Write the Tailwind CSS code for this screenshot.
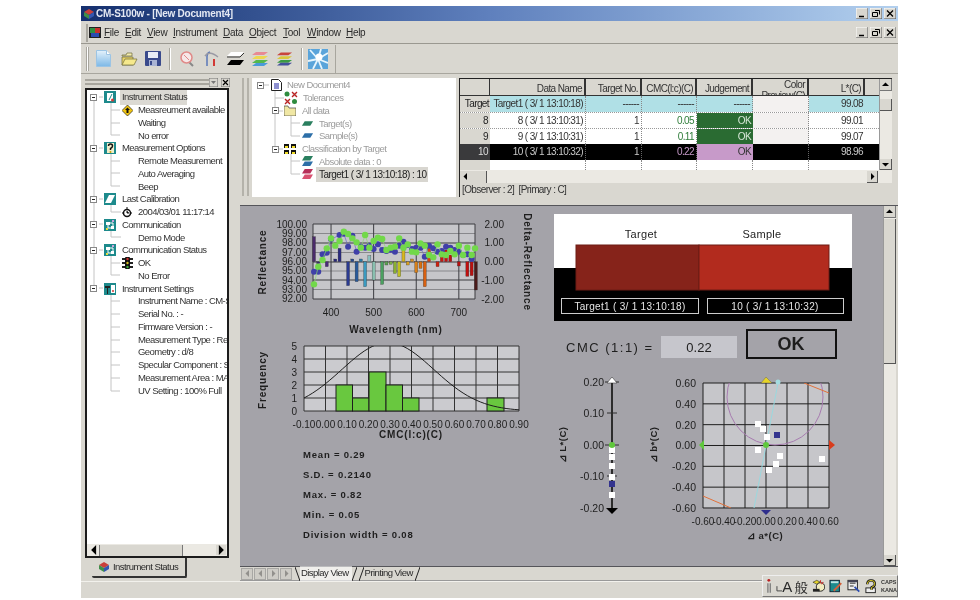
<!DOCTYPE html>
<html lang="en">
<head>
<meta charset="UTF-8">
<title>CM-S100w</title>
<script src="https://cdn.jsdelivr.net/npm/@tailwindcss/browser@4"></script>
</head>
<body class="bg-white w-[980px] h-[600px] overflow-hidden pl-[81px] pt-[6px] font-['Liberation_Sans',sans-serif] text-[9.5px] tracking-[-0.55px] text-[#2a2a2a]">

<!-- shared icons -->
<svg class="hidden">
  <symbol id="tb-minus" viewBox="0 0 7 7"><rect x=".5" y=".5" width="6" height="6" fill="#fff" stroke="#888"/><path d="M2 3.5h3" stroke="#222"/></symbol>
  <symbol id="net" viewBox="0 0 12 12"><rect width="12" height="12" fill="#1d8a8c"/><path d="M2 3h4v3H2zM7 7h3v3H7z" fill="#fff"/><path d="M4 6v3h3M6 4h3v3" stroke="#fff" fill="none"/><rect x="8" y="1" width="2" height="2" fill="#c9a0dc"/><rect x="2" y="9" width="2" height="2" fill="#e6e040"/></symbol>
  <symbol id="stack-a" viewBox="0 0 18 16"><path d="M5 1h12l-4 3H1z" fill="#e88a94"/><path d="M5 5h12l-4 3H1z" fill="#ecd850"/><path d="M5 9h12l-4 3H1z" fill="#54b84c"/><path d="M5 12h12l-4 3H1z" fill="#4a9ad8"/></symbol>
  <symbol id="plate" viewBox="0 0 14 8"><path d="M4 1h9L10 6H1z" fill="currentColor"/></symbol>
  <symbol id="win-min" viewBox="0 0 12 11"><rect width="12" height="11" fill="#d8d6cf"/><path d="M0 11V0h12" stroke="#fff" fill="none"/><path d="M12 0v11H0" stroke="#555" fill="none"/><path d="M3 8.5h5" stroke="#000" stroke-width="1.5"/></symbol>
  <symbol id="win-res" viewBox="0 0 12 11"><rect width="12" height="11" fill="#d8d6cf"/><path d="M0 11V0h12" stroke="#fff" fill="none"/><path d="M12 0v11H0" stroke="#555" fill="none"/><path d="M5 2.5h4.500v4M2.500 4.500h5v4h-5z" stroke="#000" fill="none"/></symbol>
  <symbol id="win-x" viewBox="0 0 12 11"><rect width="12" height="11" fill="#d8d6cf"/><path d="M0 11V0h12" stroke="#fff" fill="none"/><path d="M12 0v11H0" stroke="#555" fill="none"/><path d="M3 2.500l6 6M9 2.500l-6 6" stroke="#000" stroke-width="1.300"/></symbol>
  <symbol id="arr-l" viewBox="0 0 7 7"><path d="M5 0v7L1.500 3.500z" fill="#000"/></symbol>
  <symbol id="arr-r" viewBox="0 0 7 7"><path d="M2 0v7l3.500-3.500z" fill="#000"/></symbol>
  <symbol id="arr-u" viewBox="0 0 7 7"><path d="M0 5h7L3.500 1.500z" fill="#000"/></symbol>
  <symbol id="arr-d" viewBox="0 0 7 7"><path d="M0 2h7L3.500 5.500z" fill="#000"/></symbol>
</svg>

<div class="relative w-[817px] h-[592px] flex flex-col bg-[#d9d7d0] blur-[0.35px]">

  <!-- title bar -->
  <div class="h-[15px] flex items-center pl-[2px] pr-[2px] bg-gradient-to-r from-[#16306f] via-[#5f80bd] to-[#b3d0ee]">
    <svg class="w-[12px] h-[12px]" viewBox="0 0 12 12"><path d="M6 1l5 3-5 3-5-3z" fill="#c9403a"/><path d="M1 4l5 3v4l-5-3z" fill="#3f8f4a"/><path d="M11 4L6 7v4l5-3z" fill="#3457b0"/></svg>
    <span class="ml-[1px] font-bold text-[10px] tracking-[-0.25px] text-[#e4e8f2]">CM-S100w - [New Document4]</span>
    <div class="ml-auto flex gap-[2px]">
      <svg class="w-[12px] h-[11px]"><use href="#win-min"/></svg>
      <svg class="w-[12px] h-[11px]"><use href="#win-res"/></svg>
      <svg class="w-[12px] h-[11px]"><use href="#win-x"/></svg>
    </div>
  </div>

  <!-- menu -->
  <div class="mt-px h-[22px] flex items-center border-b border-[#9a9890] pl-[5px] pr-[2px] tracking-[-0.3px]">
    <div class="w-[2px] h-[18px] border-x border-[#a8a69e] bg-white"></div>
    <svg class="ml-[1px] w-[12px] h-[11px]" viewBox="0 0 12 11"><rect width="12" height="11" fill="#222"/><path d="M1 1h6v5H1z" fill="#2f8f3e"/><path d="M6 1h5v5H6z" fill="#c92f2a"/><path d="M2 6h8v4H2z" fill="#2b4bb0"/></svg>
    <span class="ml-[3px] w-[21px] text-[10px]"><u>F</u>ile</span>
    <span class="w-[22px] text-[10px]"><u>E</u>dit</span>
    <span class="w-[26px] text-[10px]"><u>V</u>iew</span>
    <span class="w-[50px] text-[10px]"><u>I</u>nstrument</span>
    <span class="w-[26px] text-[10px]"><u>D</u>ata</span>
    <span class="w-[34px] text-[10px]"><u>O</u>bject</span>
    <span class="w-[24px] text-[10px]"><u>T</u>ool</span>
    <span class="w-[39px] text-[10px]"><u>W</u>indow</span>
    <span class="text-[10px]"><u>H</u>elp</span>
    <div class="ml-auto flex gap-[2px]">
      <svg class="w-[12px] h-[11px]"><use href="#win-min"/></svg>
      <svg class="w-[12px] h-[11px]"><use href="#win-res"/></svg>
      <svg class="w-[12px] h-[11px]"><use href="#win-x"/></svg>
    </div>
  </div>

  <!-- toolbar -->
  <div class="h-[30px] flex items-center border-b border-[#a8a69e] pl-[5px]">
    <div class="w-[3px] h-[24px] border-x border-[#a8a69e] bg-white"></div>
    <div class="w-[247px] h-[28px] flex items-center border-r border-[#a8a69e] pl-[7px]">
      <svg class="w-[15px] h-[17px]" viewBox="0 0 15 17"><defs><linearGradient id="ng" x1="0" y1="0" x2="0" y2="1"><stop offset="0" stop-color="#e4f1fb"/><stop offset="1" stop-color="#7cb8e6"/></linearGradient></defs><path d="M.5.500h10l4 4v12H.5z" fill="url(#ng)" stroke="#9cc4e4"/><path d="M10.500.500v4h4" fill="#fff" stroke="#9cc4e4"/></svg>
      <svg class="ml-[10px] w-[17px] h-[14px]" viewBox="0 0 17 14"><path d="M1 3h4l1-2h5v3H1z" fill="#f3ecb0" stroke="#6d6a3a" stroke-width=".7"/><path d="M1 13V5h11v8z" fill="#e8d36a" stroke="#6d6a3a" stroke-width=".7"/><path d="M1 13l3-6h12l-3 6z" fill="#f5e88c" stroke="#6d6a3a" stroke-width=".7"/></svg>
      <svg class="ml-[7px] w-[16px] h-[15px]" viewBox="0 0 16 15"><rect width="16" height="15" rx="1" fill="#3a4a8c"/><rect x="3" y="1" width="10" height="6" fill="#e8ecf6"/><rect x="4" y="9" width="8" height="6" fill="#aab4d4"/><rect x="5" y="10" width="2" height="4" fill="#3a4a8c"/></svg>
      <div class="ml-[8px] w-[2px] h-[22px] border-x border-l-[#a8a69e] border-r-white"></div>
      <svg class="ml-[9px] w-[15px] h-[16px]" viewBox="0 0 15 16"><path d="M9 11l4 4" stroke="#888" stroke-width="2"/><circle cx="6.500" cy="6.500" r="5.500" fill="#f6e8e8" stroke="#e08a88" stroke-width="1.500"/><path d="M4 4l5 5" stroke="#e08a88"/></svg>
      <svg class="ml-[9px] w-[15px] h-[16px]" viewBox="0 0 15 16"><path d="M3 15V5q0-3 3-4" stroke="#5a78b8" stroke-width="1.500" fill="none"/><path d="M1 5q4-6 13 1" stroke="#9a9aa4" stroke-width="1.500" fill="none"/><path d="M10 8v7" stroke="#d23a36" stroke-width="2"/></svg>
      <svg class="ml-[7px] w-[18px] h-[16px]" viewBox="0 0 18 16"><path d="M5 1h13l-4 4H1z" fill="#fff"/><path d="M1 6h13l4-4" stroke="#333" fill="none"/><path d="M5 9h13l-4 5H1z" fill="#000"/></svg>
      <svg class="ml-[7px] w-[18px] h-[16px]"><use href="#stack-a"/></svg>
      <svg class="ml-[7px] w-[17px] h-[16px]" viewBox="0 0 18 16"><path d="M5 1h12l-4 3H1z" fill="#c8443c"/><path d="M5 5h12l-4 3H1z" fill="#d8c83c"/><path d="M5 9h12l-4 3H1z" fill="#3a9a44"/><path d="M5 12h12l-4 3H1z" fill="#44509c"/></svg>
      <div class="ml-[8px] w-[2px] h-[22px] border-x border-l-[#a8a69e] border-r-white"></div>
      <svg class="ml-[5px] w-[20px] h-[20px]" viewBox="0 0 20 20"><rect width="20" height="20" fill="#5aa4da"/><path d="M10 10L2 1M10 10L13 0M10 10L20 4M10 10L20 14M10 10L14 20M10 10L5 20M10 10L0 12" stroke="#e6f5fd" stroke-width="1.800"/><circle cx="11" cy="8" r="3.500" fill="#fff"/></svg>
    </div>
  </div>

  <!-- main -->
  <div class="flex-1 min-h-0 flex">

    <!-- left dock -->
    <div class="w-[152px] shrink-0 pl-[4px] pt-[2px] flex flex-col">
      <div class="h-[12px] flex items-center w-[145px]">
        <div class="w-[125px] h-[6px] border-y-2 border-[#a8a69e]"></div>
        <svg class="w-[9px] h-[9px]" viewBox="0 0 9 9"><rect width="9" height="9" fill="#d8d6cf" stroke="#777"/><path d="M2 3h5L4.500 6z" fill="#777"/></svg>
        <svg class="ml-[3px] w-[9px] h-[9px]" viewBox="0 0 9 9"><rect width="9" height="9" fill="#d8d6cf" stroke="#777"/><path d="M2 2l5 5M7 2l-5 5" stroke="#000" stroke-width="1.200"/></svg>
      </div>
      <div class="relative w-[144px] h-[470px] border-2 border-[#1c1c1c] bg-white flex flex-col">
        <!-- tree connectors -->
        <svg class="absolute left-0 top-0 w-[140px] h-[320px]" viewBox="0 0 140 320" fill="none" stroke="#c4c4c4">
          <path d="M7 7V198M12 7h4M12 58h4M12 109h4M12 134h4M12 160h4M12 198h4"/>
          <path d="M24 13V45M24 20h9M24 33h9M24 45h9M24 64V96M24 71h9M24 83h9M24 96h9M24 115v7h10M24 141v6h10M24 166v19M24 173h9M24 185h9M24 204V301M24 211h9M24 224h9M24 237h9M24 250h9M24 262h9M24 275h9M24 288h9M24 301h9"/>
        </svg>
        <div class="relative flex-1 min-h-0 overflow-hidden whitespace-nowrap pt-px text-[#333]">
          <div class="flex items-center h-[12.75px] pl-[3px]"><svg class="w-[7px] h-[7px] mr-[7px]"><use href="#tb-minus"/></svg>
            <svg class="w-[12px] h-[12px]" viewBox="0 0 12 12"><rect width="12" height="12" fill="#1d8a8c"/><path d="M3 2h6v8H3z" fill="#fff"/><path d="M5 9l3-6" stroke="#1d8a8c"/><circle cx="8.500" cy="9" r="1.500" fill="#d23a36"/></svg>
            <span class="ml-[4px] pl-[2px] bg-[#dbd9d3]">Instrument Status</span></div>
          <div class="flex items-center h-[12.75px] pl-[35px]"><svg class="shrink-0 w-[11px] h-[11px]" viewBox="0 0 11 11"><path d="M5.500 0L11 5.500 5.500 11 0 5.500z" fill="#f1c40f" stroke="#222" stroke-width=".7"/><path d="M5.500 2.500L8 5H6.500v3h-2V5H3z" fill="#111"/></svg><span class="ml-[5px]">Measreument available</span></div>
          <div class="flex items-center h-[12.75px] pl-[51px]">Waiting</div>
          <div class="flex items-center h-[12.75px] pl-[51px]">No error</div>
          <div class="flex items-center h-[12.75px] pl-[3px]"><svg class="w-[7px] h-[7px] mr-[7px]"><use href="#tb-minus"/></svg>
            <svg class="w-[12px] h-[12px]" viewBox="0 0 12 12"><rect width="12" height="12" fill="#1d8a8c"/><path d="M3 1h7v10H3z" fill="#f2eecb"/><path d="M4.500 4q0-2 2-2t2 2q0 1.500-2 2.500v1.500" stroke="#111" stroke-width="1.500" fill="none"/><circle cx="6.500" cy="10" r="1" fill="#c9a400"/></svg>
            <span class="ml-[6px]">Measurement Options</span></div>
          <div class="flex items-center h-[12.75px] pl-[51px]">Remote Measurement</div>
          <div class="flex items-center h-[12.75px] pl-[51px]">Auto Averaging</div>
          <div class="flex items-center h-[12.75px] pl-[51px]">Beep</div>
          <div class="flex items-center h-[12.75px] pl-[3px]"><svg class="w-[7px] h-[7px] mr-[7px]"><use href="#tb-minus"/></svg>
            <svg class="w-[12px] h-[12px]" viewBox="0 0 12 12"><rect width="12" height="12" fill="#1d8a8c"/><path d="M5 2h6L7 10H1z" fill="#fff"/></svg>
            <span class="ml-[6px]">Last Calibration</span></div>
          <div class="flex items-center h-[12.75px] pl-[35px]"><svg class="shrink-0 w-[10px] h-[11px] mr-[1px]" viewBox="0 0 10 11"><circle cx="5" cy="6" r="3.500" fill="#fff" stroke="#111" stroke-width="1.500"/><path d="M5 0v2M0 6h2M8 6h2M5 4v2h2" stroke="#111"/></svg><span class="ml-[5px]">2004/03/01 11:17:14</span></div>
          <div class="flex items-center h-[12.75px] pl-[3px]"><svg class="w-[7px] h-[7px] mr-[7px]"><use href="#tb-minus"/></svg><svg class="w-[12px] h-[12px]"><use href="#net"/></svg><span class="ml-[6px]">Communication</span></div>
          <div class="flex items-center h-[12.75px] pl-[51px]">Demo Mode</div>
          <div class="flex items-center h-[12.75px] pl-[3px]"><svg class="w-[7px] h-[7px] mr-[7px]"><use href="#tb-minus"/></svg><svg class="w-[12px] h-[12px]"><use href="#net"/></svg><span class="ml-[6px]">Communication Status</span></div>
          <div class="flex items-center h-[12.75px] pl-[35px]"><svg class="shrink-0 w-[11px] h-[12px]" viewBox="0 0 11 12"><path d="M0 1h11v2H0zM0 5h11v2H0zM0 9h11v2H0z" fill="#222"/><rect x="3" y="0" width="5" height="12" rx="1" fill="#111"/><circle cx="5.500" cy="2" r="1.200" fill="#c9302c"/><circle cx="5.500" cy="6" r="1.200" fill="#d8c020"/><circle cx="5.500" cy="10" r="1.200" fill="#3fae3a"/></svg><span class="ml-[5px]">OK</span></div>
          <div class="flex items-center h-[12.75px] pl-[51px]">No Error</div>
          <div class="flex items-center h-[12.75px] pl-[3px]"><svg class="w-[7px] h-[7px] mr-[7px]"><use href="#tb-minus"/></svg>
            <svg class="w-[12px] h-[12px]" viewBox="0 0 12 12"><rect width="12" height="12" fill="#1d8a8c"/><path d="M1 3h5v2H4v6H3V5H1z" fill="#222"/><path d="M7 2h4v8H7z" fill="#fff"/><circle cx="9" cy="8" r="1" fill="#d23a36"/></svg>
            <span class="ml-[6px]">Instrument Settings</span></div>
          <div class="flex items-center h-[12.75px] pl-[51px]">Instrument Name : CM-S100w</div>
          <div class="flex items-center h-[12.75px] pl-[51px]">Serial No. : -</div>
          <div class="flex items-center h-[12.75px] pl-[51px]">Firmware Version : -</div>
          <div class="flex items-center h-[12.75px] pl-[51px]">Measurement Type : Reflectance</div>
          <div class="flex items-center h-[12.75px] pl-[51px]">Geometry : d/8</div>
          <div class="flex items-center h-[12.75px] pl-[51px]">Specular Component : SCI</div>
          <div class="flex items-center h-[12.75px] pl-[51px]">Measurement Area : MAV</div>
          <div class="flex items-center h-[12.75px] pl-[51px]">UV Setting : 100% Full</div>
        </div>
        <!-- tree h-scroll -->
        <div class="relative h-[12px] flex items-center bg-[#ebe9e3]">
          <svg class="w-[10px] h-[10px] ml-[2px]"><use href="#arr-l"/></svg>
          <div class="w-[84px] h-[11px] bg-[#d9d7d0] border-x border-[#777]"></div>
          <svg class="ml-auto mr-[1px] w-[10px] h-[10px] bg-[#d9d7d0]"><use href="#arr-r"/></svg>
        </div>
      </div>
      <div class="ml-[7px] w-[95px] h-[20px] flex items-center pl-[6px] border-r-2 border-b-2 border-[#333] rounded-b-[2px]">
        <svg class="w-[12px] h-[12px]" viewBox="0 0 12 12"><path d="M6 1l5 3-5 3-5-3z" fill="#c9403a"/><path d="M1 4l5 3v4l-5-3z" fill="#3f8f4a"/><path d="M11 4L6 7v4l5-3z" fill="#3457b0"/></svg>
        <span class="ml-[3px]">Instrument Status</span>
      </div>
    </div>

    <!-- right side -->
    <div class="flex-1 min-w-0 flex flex-col pl-[7px]">

      <!-- upper panes -->
      <div class="h-[131px] flex pt-[4px] pl-[2px]">
        <div class="w-[7px] h-[118px] border-x-2 border-[#b4b2aa]"></div>
        <!-- data tree -->
        <div class="relative ml-[3px] w-[204px] h-[119px] bg-white overflow-hidden whitespace-nowrap text-[#9c9c9c] pt-px">
          <svg class="absolute left-0 top-0 w-[204px] h-[119px]" viewBox="0 0 204 119" fill="none" stroke="#c4c4c4">
            <path d="M8 7h9M23 12V71M23 20h9M27 33h4M27 71h4M39 38V58M39 45h9M39 58h9M39 76V96M39 83h9M39 96h9"/>
          </svg>
          <div class="relative flex items-center h-[12.75px] pl-[5px]"><svg class="w-[7px] h-[7px] mr-[7px]"><use href="#tb-minus"/></svg>
            <svg class="w-[11px] h-[12px]" viewBox="0 0 11 12"><path d="M.5.500h7l3 3v8H.5z" fill="#fff" stroke="#222"/><path d="M3 4h5v6H3z" fill="#8c8fd0"/></svg><span class="ml-[5px]">New Document4</span></div>
          <div class="relative flex items-center h-[12.75px] pl-[32px]">
            <svg class="w-[14px] h-[14px]" viewBox="0 0 14 14"><circle cx="3" cy="3" r="2.500" fill="#2e8b3e"/><path d="M8 1h5v5H8z" fill="#eee"/><path d="M8 1l5 5M13 1l-5 5" stroke="#b22" stroke-width="1.300"/><path d="M1 8h5v5H1z" fill="#eee"/><path d="M1 8l5 5M6 8l-5 5" stroke="#b22" stroke-width="1.300"/><circle cx="10.500" cy="10.500" r="2.500" fill="#2e8b3e"/></svg>
            <span class="ml-[5px]">Tolerances</span></div>
          <div class="relative flex items-center h-[12.75px] pl-[20px]"><svg class="w-[7px] h-[7px] mr-[5px]"><use href="#tb-minus"/></svg>
            <svg class="w-[12px] h-[11px]" viewBox="0 0 12 11"><path d="M0 1h4l1 2h7v8H0z" fill="#f0e7a4" stroke="#444" stroke-width=".7"/></svg><span class="ml-[6px]">All data</span></div>
          <div class="relative flex items-center h-[12.75px] pl-[49px]"><svg class="w-[13px] h-[8px] text-[#2a7f5f]"><use href="#plate"/></svg><span class="ml-[5px]">Target(s)</span></div>
          <div class="relative flex items-center h-[12.75px] pl-[49px]"><svg class="w-[13px] h-[8px] text-[#2d6fa8]"><use href="#plate"/></svg><span class="ml-[5px]">Sample(s)</span></div>
          <div class="relative flex items-center h-[12.75px] pl-[20px]"><svg class="w-[7px] h-[7px] mr-[5px]"><use href="#tb-minus"/></svg>
            <svg class="w-[12px] h-[12px]" viewBox="0 0 12 12"><path d="M0 1h5v4H0zM7 1h5v4H7zM0 7h5v4H0zM7 7h5v4H7z" fill="#111"/><path d="M1 3h3v2H1zM8 3h3v2H8zM1 9h3v2H1zM8 9h3v2H8z" fill="#f0dc2a"/></svg><span class="ml-[6px]">Classification by Target</span></div>
          <div class="relative flex items-center h-[12.75px] pl-[49px]"><svg class="w-[13px] h-[11px]" viewBox="0 0 14 12"><path d="M4 0h9l-3 5H1z" fill="#2a7f5f"/><path d="M4 6h9l-3 5H1z" fill="#2d6fa8"/></svg><span class="ml-[5px]">Absolute data : 0</span></div>
          <div class="relative flex items-center h-[12.75px] pl-[49px]"><svg class="w-[13px] h-[11px]" viewBox="0 0 14 12"><path d="M4 0h9l-3 5H1z" fill="#b8305a"/><path d="M4 6h9l-3 5H1z" fill="#d85070"/></svg><span class="ml-[2px] pl-[3px] pr-[2px] bg-[#d8d6d0] text-[#222] text-[10px]">Target1 ( 3/ 1 13:10:18) : 10</span></div>
        </div>
        <!-- data table -->
        <div class="ml-[3px] w-[433px] h-[119px] flex flex-col text-[#333] whitespace-nowrap tracking-[-0.6px]">
          <div class="flex h-[92px] border-t border-l border-[#222]">
            <div class="w-[419px] flex flex-col overflow-hidden bg-white">
              <div class="h-[17px] shrink-0 flex bg-[#d9d7d0] text-[10px] text-right border-b border-[#333]">
                <div class="w-[30px] border-r border-[#333]"></div>
                <div class="w-[96px] pr-[2px] pt-[2px] border-r-2 border-[#333]">Data Name</div>
                <div class="w-[56px] pr-[2px] pt-[2px] border-r-2 border-[#333]">Target No.</div>
                <div class="w-[55px] pr-[2px] pt-[2px] border-r-2 border-[#333]">CMC(l:c)(C)</div>
                <div class="w-[56px] pr-[2px] pt-[2px] border-r-2 border-[#333]">Judgement</div>
                <div class="w-[56px] pr-[2px] border-r-2 border-[#333] leading-[11px] overflow-hidden">Color<br>Preview(C)</div>
                <div class="w-[56px] pr-[2px] pt-[2px] border-r-2 border-[#333]">L*(C)</div>
              </div>
              <div class="h-[16px] shrink-0 flex items-center text-right bg-[#b0e0e6] text-[10px]">
                <div class="w-[30px] h-full pr-[1px] bg-[#d9d7d0] leading-[16px] text-[#222]">Target</div>
                <div class="w-[96px] h-full pr-[2px] leading-[16px] border-r border-dotted border-[#888]">Target1 ( 3/ 1 13:10:18)</div>
                <div class="w-[56px] h-full pr-[2px] leading-[16px] border-r border-dotted border-[#888]">------</div>
                <div class="w-[55px] h-full pr-[2px] leading-[16px] border-r border-dotted border-[#888]">------</div>
                <div class="w-[56px] h-full pr-[2px] leading-[16px] border-r border-dotted border-[#888]">------</div>
                <div class="w-[56px] h-full bg-[#f3f1f0] border-r border-dotted border-[#888]"></div>
                <div class="w-[56px] h-full pr-[2px] leading-[16px]">99.08</div>
              </div>
              <div class="h-[16px] shrink-0 flex items-center text-right text-[10px] border-t border-dotted border-[#999]">
                <div class="w-[30px] h-full pr-[2px] bg-[#d9d7d0] leading-[15px] text-[#222]">8</div>
                <div class="w-[96px] h-full pr-[2px] leading-[15px] border-r border-dotted border-[#888]">8 ( 3/ 1 13:10:31)</div>
                <div class="w-[56px] h-full pr-[2px] leading-[15px] border-r border-dotted border-[#888]">1</div>
                <div class="w-[55px] h-full pr-[2px] leading-[15px] border-r border-dotted border-[#888] text-[#2f7d3a]">0.05</div>
                <div class="w-[56px] h-full pr-[2px] leading-[15px] bg-[#2a6b32] text-[#d8e8d8]">OK</div>
                <div class="w-[56px] h-full bg-[#f3f1f0] border-r border-dotted border-[#888]"></div>
                <div class="w-[56px] h-full pr-[2px] leading-[15px]">99.01</div>
              </div>
              <div class="h-[16px] shrink-0 flex items-center text-right text-[10px] border-t border-dotted border-[#999]">
                <div class="w-[30px] h-full pr-[2px] bg-[#d9d7d0] leading-[15px] text-[#222]">9</div>
                <div class="w-[96px] h-full pr-[2px] leading-[15px] border-r border-dotted border-[#888]">9 ( 3/ 1 13:10:31)</div>
                <div class="w-[56px] h-full pr-[2px] leading-[15px] border-r border-dotted border-[#888]">1</div>
                <div class="w-[55px] h-full pr-[2px] leading-[15px] border-r border-dotted border-[#888] text-[#2f7d3a]">0.11</div>
                <div class="w-[56px] h-full pr-[2px] leading-[15px] bg-[#2a6b32] text-[#d8e8d8]">OK</div>
                <div class="w-[56px] h-full bg-[#f3f1f0] border-r border-dotted border-[#888]"></div>
                <div class="w-[56px] h-full pr-[2px] leading-[15px]">99.07</div>
              </div>
              <div class="h-[16px] shrink-0 flex items-center text-right text-[10px] bg-black text-[#c8c8c8]">
                <div class="w-[30px] h-full pr-[2px] bg-[#3a3a3c] leading-[16px] text-[#ddd]">10</div>
                <div class="w-[96px] h-full pr-[2px] leading-[16px] border-r border-dotted border-[#666]">10 ( 3/ 1 13:10:32)</div>
                <div class="w-[56px] h-full pr-[2px] leading-[16px] border-r border-dotted border-[#666]">1</div>
                <div class="w-[55px] h-full pr-[2px] leading-[16px] border-r border-dotted border-[#666] text-[#c79ac9]">0.22</div>
                <div class="w-[56px] h-full pr-[2px] leading-[16px] bg-[#c79ac9] text-[#333]">OK</div>
                <div class="w-[56px] h-full border-r border-dotted border-[#666]"></div>
                <div class="w-[56px] h-full pr-[2px] leading-[16px]">98.96</div>
              </div>
              <div class="flex-1 flex">
                <div class="w-[30px] bg-[#d9d7d0]"></div>
                <div class="w-[96px] border-r border-dotted border-[#888]"></div>
                <div class="w-[56px] border-r border-dotted border-[#888]"></div>
                <div class="w-[55px] border-r border-dotted border-[#888]"></div>
                <div class="w-[56px] border-r border-dotted border-[#888]"></div>
                <div class="w-[56px] border-r border-dotted border-[#888]"></div>
              </div>
            </div>
            <div class="w-[13px] flex flex-col bg-[#ebe9e3] border-l border-[#999]">
              <div class="h-[12px] flex items-center justify-center bg-[#d9d7d0] border-b border-r border-[#777]"><svg class="w-[7px] h-[7px]"><use href="#arr-u"/></svg></div>
              <div class="mt-[8px] h-[12px] bg-[#d9d7d0] border-b border-r border-[#555]"></div>
              <div class="mt-auto h-[11px] flex items-center justify-center bg-[#d9d7d0] border-b border-r border-[#555]"><svg class="w-[7px] h-[7px]"><use href="#arr-d"/></svg></div>
            </div>
          </div>
          <div class="h-[13px] flex items-center bg-[#ebe9e3] border-l border-[#222] pr-[14px]">
            <div class="w-[10px] h-[12px] flex items-center justify-center bg-[#d9d7d0]"><svg class="w-[7px] h-[7px]"><use href="#arr-l"/></svg></div>
            <div class="w-[17px] h-[12px] bg-[#d9d7d0] border-r border-[#555]"></div>
            <div class="ml-auto w-[11px] h-[12px] flex items-center justify-center bg-[#d9d7d0] border-b border-r border-[#555]"><svg class="w-[7px] h-[7px]"><use href="#arr-r"/></svg></div>
          </div>
          <div class="h-[14px] pl-[2px] leading-[14px] border-l border-[#222] text-[10px]">[Observer : 2]&nbsp; [Primary : C]</div>
        </div>
      </div>

      <!-- chart view -->
      <div class="flex h-[362px] border-y border-[#55555a]">
        <svg id="chart" class="w-[643px] h-[360px] bg-[#a4a3a9] tracking-normal" viewBox="241 206 643 360" font-family="'Liberation Sans', sans-serif" font-size="10" fill="#1e1e1e">
          <clipPath id="hist-clip"><rect x="305" y="346" width="215" height="65"/></clipPath>
          <!-- spectrum plot -->
          <rect x="314" y="224" width="162" height="75" fill="#c6c6ca"/>
          <g id="spec-grid" stroke="#3c3c40" stroke-width="1" fill="none"></g>
          <g id="spec-bars"></g>
          <g id="spec-blue"></g>
          <g id="spec-green"></g>
          <g id="spec-labels"></g>
          <text x="264" y="262" transform="rotate(-90 264 262)" text-anchor="middle" dominant-baseline="middle" font-weight="700" letter-spacing=".8">Reflectance</text>
          <text x="528" y="262" transform="rotate(90 528 262)" text-anchor="middle" dominant-baseline="middle" font-weight="700" letter-spacing=".8">Delta-Reflectance</text>
          <text x="397" y="333" text-anchor="middle" font-weight="700" letter-spacing=".9">Wavelength (nm)</text>

          <!-- histogram -->
          <rect x="305" y="346" width="215" height="65" fill="#cbcbcf"/>
          <g id="hist-grid" stroke="#333" stroke-width="1" fill="none"></g>
          <g fill="#69c83f" stroke="#1e1e1e">
            <rect x="337" y="385" width="16.500" height="26"/><rect x="353.500" y="398" width="16.500" height="13"/><rect x="370" y="372" width="17" height="39"/><rect x="387" y="385" width="16.500" height="26"/><rect x="403.500" y="398" width="16.500" height="13"/><rect x="488" y="398" width="17" height="13"/>
          </g>
          <path id="hist-curve" clip-path="url(#hist-clip)" fill="none" stroke="#1e1e1e" stroke-width="1"/>
          <g id="hist-labels"></g>
          <text x="264" y="380" transform="rotate(-90 264 380)" text-anchor="middle" dominant-baseline="middle" font-weight="700" letter-spacing=".8">Frequency</text>
          <text x="412" y="438" text-anchor="middle" font-weight="700" letter-spacing=".8">CMC(l:c)(C)</text>

          <!-- statistics -->
          <g font-weight="700" letter-spacing=".8" font-size="9.500">
            <text x="304" y="458">Mean = 0.29</text>
            <text x="304" y="478">S.D. = 0.2140</text>
            <text x="304" y="498">Max. = 0.82</text>
            <text x="304" y="518">Min. = 0.05</text>
            <text x="304" y="538">Division width = 0.08</text>
          </g>

          <!-- colour panel -->
          <rect x="555" y="214" width="298" height="54" fill="#fff"/>
          <rect x="555" y="268" width="298" height="53" fill="#000"/>
          <rect x="577" y="245" width="123" height="45" fill="#86231a" stroke="#6d1c15"/>
          <rect x="700" y="245" width="130" height="45" fill="#b22b1e" stroke="#6d1c15"/>
          <text x="642" y="238" text-anchor="middle" font-size="11" letter-spacing=".3">Target</text>
          <text x="763" y="238" text-anchor="middle" font-size="11" letter-spacing=".3">Sample</text>
          <rect x="562.500" y="298.500" width="137" height="15" fill="none" stroke="#ccc"/>
          <rect x="708.500" y="298.500" width="136" height="15" fill="none" stroke="#ccc"/>
          <text x="631" y="310" text-anchor="middle" fill="#e6e6e6" letter-spacing=".3">Target1 ( 3/ 1 13:10:18)</text>
          <text x="776" y="310" text-anchor="middle" fill="#e6e6e6" letter-spacing=".3">10 ( 3/ 1 13:10:32)</text>
          <text x="567" y="352" font-size="13" letter-spacing="1.500">CMC (1:1) =</text>
          <rect x="662" y="336" width="76" height="22" fill="#c6c6cc"/>
          <text x="700" y="352" text-anchor="middle" font-size="13">0.22</text>
          <rect x="748" y="330" width="89" height="28" fill="none" stroke="#111" stroke-width="2"/>
          <text x="792" y="350" text-anchor="middle" font-size="18" font-weight="700">OK</text>

          <!-- delta L axis -->
          <path d="M613 382V508" stroke="#2c2c2c" stroke-width="2"/>
          <path d="M606 382h14M608 413h10M606 445h14M608 476h10" stroke="#2c2c2c"/>
          <path d="M608 383l5-6 5 6z" fill="#fff" stroke="#222" stroke-width=".5"/>
          <path d="M607 508h12l-6 6z" fill="#000"/>
          <g text-anchor="end" font-size="10.500">
            <text x="605" y="386">0.20</text><text x="605" y="417">0.10</text><text x="605" y="449">0.00</text><text x="605" y="480">-0.10</text><text x="605" y="512">-0.20</text>
          </g>
          <g fill="#fff"><rect x="610" y="447" width="6" height="6"/><rect x="610" y="454" width="6" height="6"/><rect x="610" y="463" width="6" height="6"/><rect x="610" y="474" width="6" height="6"/><rect x="610" y="492" width="6" height="6"/></g>
          <rect x="610" y="481" width="6" height="6" fill="#33338e"/>
          <circle cx="613" cy="445" r="3" fill="#5fc83c"/>
          <text x="564" y="445" transform="rotate(-90 564 445)" text-anchor="middle" dominant-baseline="middle" font-weight="700" font-size="9.500" letter-spacing=".5">⊿ L*(C)</text>

          <!-- a*b* plot -->
          <rect x="704" y="383" width="126" height="125" fill="#c6c6ca"/>
          <g id="ab-grid" stroke="#1e1e1e" fill="none"></g>
          <clipPath id="ab-clip"><rect x="704" y="383" width="126" height="125"/></clipPath>
          <g clip-path="url(#ab-clip)" fill="none">
            <circle cx="776" cy="397" r="48" stroke="#a77bb0"/>
            <path d="M779 383L755 508" stroke="#9ad8de"/>
            <path d="M805 383L830 393M704 496L732 508" stroke="#e0703a"/>
          </g>
          <path d="M762 383l5-6 6 6z" fill="#e6d428" stroke="#555" stroke-width=".4"/>
          <path d="M762 510h10l-5 5z" fill="#2e2e8c"/>
          <path d="M705 440v10l-5-5z" fill="#5fc83c"/>
          <path d="M830 440v10l6-5z" fill="#d83c1c"/>
          <circle cx="779" cy="382" r="2.500" fill="#a4dbe0"/>
          <g fill="#fff">
            <rect x="756" y="421" width="6" height="6"/><rect x="761" y="426" width="6" height="6"/><rect x="765" y="434" width="6" height="6"/><rect x="756" y="447" width="6" height="6"/><rect x="778" y="453" width="6" height="6"/><rect x="774" y="461" width="6" height="6"/><rect x="767" y="467" width="6" height="6"/><rect x="820" y="456" width="6" height="6"/>
          </g>
          <rect x="775" y="432" width="6" height="6" fill="#33338e"/>
          <circle cx="767" cy="445" r="3" fill="#5fc83c"/>
          <g id="ab-labels" font-size="10"></g>
          <text x="655" y="445" transform="rotate(-90 655 445)" text-anchor="middle" dominant-baseline="middle" font-weight="700" font-size="9.500" letter-spacing=".5">⊿ b*(C)</text>
          <text x="766" y="539" text-anchor="middle" font-weight="700" font-size="9.500" letter-spacing=".5">⊿ a*(C)</text>
        </svg>
        <div class="w-[13px] flex flex-col bg-[#ebe9e3] border-l border-[#999]">
          <div class="h-[12px] flex items-center justify-center bg-[#d9d7d0] border-b border-r border-[#777]"><svg class="w-[7px] h-[7px]"><use href="#arr-u"/></svg></div>
          <div class="mt-px h-[145px] bg-[#d9d7d0] border-b border-r border-[#555]"></div>
          <div class="mt-auto h-[11px] flex items-center justify-center bg-[#d9d7d0] border-b border-r border-[#555]"><svg class="w-[7px] h-[7px]"><use href="#arr-d"/></svg></div>
        </div>
      </div>

      <!-- sheet tabs -->
      <div class="h-[14px] flex items-center pl-[1px] border-b border-[#999] -mb-px">
        <div class="flex gap-px opacity-60">
          <div class="w-[12px] h-[12px] flex items-center justify-center bg-[#c8c6c0] border border-[#888]"><svg class="w-[7px] h-[7px] opacity-50"><use href="#arr-l"/></svg></div>
          <div class="w-[12px] h-[12px] flex items-center justify-center bg-[#c8c6c0] border border-[#888]"><svg class="w-[7px] h-[7px] opacity-50"><use href="#arr-l"/></svg></div>
          <div class="w-[12px] h-[12px] flex items-center justify-center bg-[#c8c6c0] border border-[#888]"><svg class="w-[7px] h-[7px] opacity-50"><use href="#arr-r"/></svg></div>
          <div class="w-[12px] h-[12px] flex items-center justify-center bg-[#c8c6c0] border border-[#888]"><svg class="w-[7px] h-[7px] opacity-50"><use href="#arr-r"/></svg></div>
        </div>
        <svg class="ml-[3px] w-[5px] h-[14px]" viewBox="0 0 5 14"><path d="M0 0l5 14" stroke="#222"/></svg>
        <span class="bg-white/60 pl-[1px] pr-[3px]">Display View</span>
        <svg class="w-[5px] h-[14px]" viewBox="0 0 5 14"><path d="M5 0L0 14" stroke="#222"/></svg>
        <svg class="ml-[2px] w-[5px] h-[14px]" viewBox="0 0 5 14"><path d="M0 14L5 0" stroke="#222"/></svg>
        <span class="pl-[1px]">Printing View</span>
        <svg class="ml-[2px] w-[5px] h-[14px]" viewBox="0 0 5 14"><path d="M5 0L0 14" stroke="#222"/></svg>
      </div>
    </div>
  </div>

  <!-- status bar -->
  <div class="h-[17px] border-t border-[#f2f1ec]"></div>

  <!-- tray sits over the status bar and tab strip -->
  <div class="absolute right-0 bottom-[1px] w-[136px] h-[22px] flex items-center pl-[3px] border border-[#777] border-l-[#eee] border-t-[#eee] bg-[#d9d7d0]">
    <svg class="w-[7px] h-[16px]" viewBox="0 0 7 16"><circle cx="3" cy="2" r="1.500" fill="#b22"/><path d="M2 5v10M4.500 5v10" stroke="#777" stroke-width="1.300"/></svg>
    <svg class="ml-[3px] w-[7px] h-[6px] self-end mb-[4px]" viewBox="0 0 7 6"><path d="M1 0v5h6" stroke="#444" fill="none"/></svg>
    <span class="text-[15px] leading-none">A</span>
    <span class="ml-[3px] text-[13px] leading-none font-['Noto_Sans_CJK_JP',sans-serif]">般</span>
    <svg class="ml-[5px] w-[14px] h-[14px]" viewBox="0 0 14 14"><path d="M1 3l4-2 4 2-4 2z" fill="#e6d428" stroke="#222" stroke-width=".6"/><circle cx="9" cy="8" r="4.500" fill="#f1ecc0" stroke="#222"/><path d="M9 1v3M12 3l-2 2" stroke="#c9302c" stroke-width="1.200"/><path d="M1 10h7v3H1z" fill="#222"/></svg>
    <svg class="ml-[4px] w-[14px] h-[14px]" viewBox="0 0 14 14"><rect x="1" y="1" width="10" height="12" fill="#1d8a8c" stroke="#123"/><path d="M2 2h8v2H2z" fill="#bfe3e4"/><path d="M5 12L13 4" stroke="#d2603a" stroke-width="2"/></svg>
    <svg class="ml-[4px] w-[14px] h-[14px]" viewBox="0 0 14 14"><rect x="1" y="1" width="10" height="10" fill="#eee" stroke="#222"/><path d="M3 4h6M3 7h4" stroke="#222"/><path d="M1 1h10v2H1z" fill="#445"/><path d="M8 8l5 5" stroke="#2b4bb0" stroke-width="1.800"/></svg>
    <svg class="ml-[4px] w-[14px] h-[15px]" viewBox="0 0 14 15"><rect x="2" y="9" width="10" height="5" fill="#eee" stroke="#222"/><path d="M3.500 5q0-4 4-4t4 4q0 2-3.500 3.500V11" stroke="#111" stroke-width="2.500" fill="none"/><path d="M3.500 5q0-4 4-4t4 4q0 2-3.500 3.500V11" stroke="#e6d428" fill="none"/></svg>
    <div class="ml-[4px] flex flex-col text-[5.500px] font-bold leading-[8px] tracking-normal text-[#333]"><span>CAPS</span><span>KANA</span></div>
  </div>
</div>

<script>
// chart data, read off the measurement view
const NS = 'http://www.w3.org/2000/svg';
function add(id, tag, attrs, text) {
  const el = document.createElementNS(NS, tag);
  for (const k in attrs) el.setAttribute(k, attrs[k]);
  if (text !== undefined) el.textContent = text;
  document.getElementById(id).appendChild(el);
}
const nmX = nm => 315 + (nm - 360) * 0.426;

// spectrum grid
for (const y of [233.5, 252.5, 271, 289.5]) add('spec-grid', 'path', { d: `M314 ${y}H476`, stroke: '#88888c' });
for (const nm of [400, 500, 600, 700]) add('spec-grid', 'path', { d: `M${nmX(nm)} 224V299` });
for (const y of [243, 262, 280]) add('spec-grid', 'path', { d: `M314 ${y}H476` });
add('spec-grid', 'path', { d: 'M314 224V299H476V224H314' });

// delta bars: [nm, end of bar in zoomed px, colour]
const bars = [
  [360, 95, '#4a2a6a'], [370, 176, '#3a2a6a'], [390, 185, '#4a2a7a'], [410, 162, '#2a2a7a'], [420, 130, '#2a2a80'],
  [440, 242, '#2a3a90'], [450, 162, '#2a4a90'], [460, 230, '#2a5a9a'], [470, 162, '#2a7aaa'], [480, 245, '#3a9ac0'],
  [490, 152, '#8ac0c0'], [500, 225, '#8ac0b0'], [520, 238, '#4aa060'], [530, 180, '#5aa050'], [540, 178, '#7ab040'],
  [550, 205, '#8ab030'], [560, 215, '#c0c020'], [570, 130, '#d8b820'], [580, 180, '#d8a020'], [590, 162, '#d89020'],
  [600, 203, '#d88018'], [610, 190, '#d87010'], [620, 245, '#d86010'], [630, 115, '#d84010'], [650, 185, '#d02010'],
  [660, 150, '#c81810'], [670, 135, '#c81010'], [680, 150, '#c01010'], [700, 183, '#b81010'], [720, 214, '#c01010'],
  [730, 212, '#b81010'], [740, 255, '#4a1a1a']
];
for (const [nm, z, c] of bars) {
  const end = 205 + z / 3, x = nmX(nm) - 1.5;
  add('spec-bars', 'rect', { x, y: Math.min(end, 261.7), width: 3, height: Math.abs(end - 261.7), fill: c, stroke: '#333', 'stroke-width': .3 });
}

// reflectance series, y in zoomed px
const blue = [[360,200],[370,200],[380,148],[390,143],[400,103],[420,90],[430,86],[440,125],[450,92],[460,140],[470,125],[480,128],[490,122],[500,132],[510,118],[520,135],[530,138],[540,134],[550,140],[560,122],[570,110],[580,120],[590,132],[600,128],[610,128],[620,155],[630,122],[640,130],[650,140],[660,138],[670,125],[680,128],[690,135],[700,140],[710,150],[720,148],[730,162]];
const green = [[360,238],[370,185],[380,165],[390,130],[400,100],[410,122],[420,108],[430,80],[440,87],[450,100],[460,112],[470,128],[480,90],[490,128],[500,108],[510,98],[520,102],[530,135],[540,128],[550,125],[560,100],[570,128],[580,118],[590,140],[600,142],[610,115],[620,122],[630,150],[640,157],[650,118],[660,148],[670,150],[680,138],[690,148],[700,122],[710,150],[720,128],[730,150],[738,130]];
const line = pts => pts.map(([n, z]) => `${nmX(n)},${205 + z / 3}`).join(' ');
add('spec-blue', 'polyline', { points: line(blue), fill: 'none', stroke: '#6a6ac0', 'stroke-width': .7 });
for (const [n, z] of blue) add('spec-blue', 'circle', { cx: nmX(n), cy: 205 + z / 3, r: 3, fill: '#3f3fa8' });
add('spec-green', 'polyline', { points: line(green), fill: 'none', stroke: '#8ad870', 'stroke-width': .7 });
for (const [n, z] of green) add('spec-green', 'circle', { cx: nmX(n), cy: 205 + z / 3, r: 3.2, fill: '#72d84a' });

// spectrum axis labels
['100.00','99.00','98.00','97.00','96.00','95.00','94.00','93.00','92.00'].forEach((t, i) =>
  add('spec-labels', 'text', { x: 308, y: 227.5 + i * 9.37, 'text-anchor': 'end' }, t));
['2.00','1.00','0.00','-1.00','-2.00'].forEach((t, i) =>
  add('spec-labels', 'text', { x: 505, y: 227.5 + i * 18.75, 'text-anchor': 'end' }, t));
for (const nm of [400, 500, 600, 700]) add('spec-labels', 'text', { x: nmX(nm), y: 316, 'text-anchor': 'middle' }, nm);

// histogram
for (let i = 0; i <= 10; i++) add('hist-grid', 'path', { d: `M${305 + i * 21.5} 346V411` });
for (let i = 0; i <= 5; i++) add('hist-grid', 'path', { d: `M305 ${346 + i * 13}H520` });
const pts = [];
for (let v = -0.1; v <= 0.9001; v += 0.02) {
  const f = 5.26 * Math.exp(-Math.pow(v - 0.29, 2) / (2 * 0.214 * 0.214));
  pts.push(`${305 + (v + 0.1) * 215},${411 - f * 13}`);
}
document.getElementById('hist-curve').setAttribute('d', 'M' + pts.join('L'));
for (let i = 0; i <= 5; i++) add('hist-labels', 'text', { x: 298, y: 414.5 - i * 13, 'text-anchor': 'end' }, i);
['-0.10','0.00','0.10','0.20','0.30','0.40','0.50','0.60','0.70','0.80','0.90'].forEach((t, i) =>
  add('hist-labels', 'text', { x: 305 + i * 21.5, y: 428, 'text-anchor': 'middle' }, t));

// a*b* plot
for (let i = 0; i <= 6; i++) {
  add('ab-grid', 'path', { d: `M${704 + i * 21} 383V508` });
  add('ab-grid', 'path', { d: `M704 ${383 + i * 20.83}H830` });
}
['0.60','0.40','0.20','0.00','-0.20','-0.40','-0.60'].forEach((t, i) =>
  add('ab-labels', 'text', { x: 697, y: 387 + i * 20.83, 'text-anchor': 'end', 'font-size': 10.5 }, t));
['-0.60','-0.40','-0.20','0.00','0.20','0.40','0.60'].forEach((t, i) =>
  add('ab-labels', 'text', { x: 704 + i * 21, y: 525, 'text-anchor': 'middle' }, t));
</script>
</body>
</html>
